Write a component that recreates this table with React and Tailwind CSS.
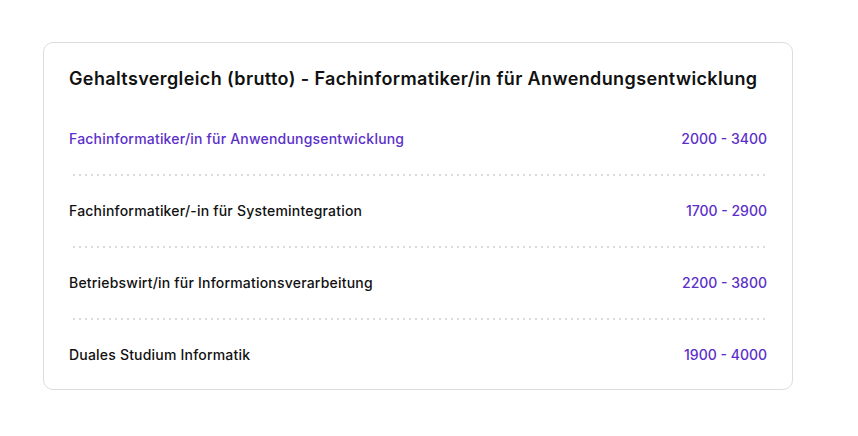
import React from "react";

const rows = [
  { name: "Fachinformatiker/in für Anwendungsentwicklung", range: "2000 - 3400", active: true },
  { name: "Fachinformatiker/-in für Systemintegration", range: "1700 - 2900" },
  { name: "Betriebswirt/in für Informationsverarbeitung", range: "2200 - 3800" },
  { name: "Duales Studium Informatik", range: "1900 - 4000" },
];

export default function App() {
  return (
    <div className="min-h-screen bg-white pt-[42px] pl-[43px] font-['Inter',sans-serif] text-[#111]">
      <div className="w-[750px] h-[348px] rounded-[10px] border border-[#dcdcdc] bg-white pt-[22px] px-[25px]">
        <h2 className="text-[18px] leading-7 font-semibold tracking-[0.38px]">
          Gehaltsvergleich (brutto) - Fachinformatiker/in für Anwendungsentwicklung
        </h2>

        <div className="mt-[11px]">
          {rows.map((row, i) => (
            <div key={row.name}>
              {i > 0 && (
                <div className="mx-[2px] h-[2px] bg-[radial-gradient(circle,#dcdcdc_1.1px,transparent_1.4px)] bg-[length:6px_2px]" />
              )}
              <div className="flex items-center justify-between py-[25px] text-sm leading-5 font-medium">
                <span className={"tracking-[0.2px] " + (row.active ? "text-[#5b2fc9]" : "")}>{row.name}</span>
                <span className="text-[#5b2fc9]">{row.range}</span>
              </div>
            </div>
          ))}
        </div>
      </div>
    </div>
  );
}
